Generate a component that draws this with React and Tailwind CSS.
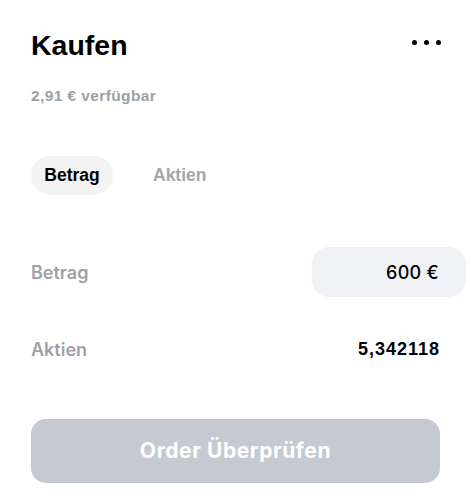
export default function App() {
  return (
    <div className="min-h-[500px] w-[476px] overflow-hidden bg-white pl-[31px] pr-[36px] pt-[28px] font-['Liberation_Sans','Inter',sans-serif]">
      {/* header */}
      <div className="flex items-start justify-between">
        <h1 className="text-[28.5px] font-bold leading-[34px] text-black">Kaufen</h1>
        <button className="mr-[-1px] mt-[12px] flex items-center gap-[7px]">
          <span className="h-[5px] w-[5px] rounded-full bg-black" />
          <span className="h-[5px] w-[5px] rounded-full bg-black" />
          <span className="h-[5px] w-[5px] rounded-full bg-black" />
        </button>
      </div>
      <p className="mt-[24px] text-[15.5px] font-bold leading-[20px] tracking-[0.4px] text-[#9b9fa6]">2,91 € verfügbar</p>

      {/* tabs */}
      <div className="mt-[50px] flex items-center gap-[27px]">
        <button className="h-[39px] w-[82px] rounded-full bg-[#f3f3f4] text-[17.5px] font-bold text-black">Betrag</button>
        <button className="h-[39px] px-[13px] text-[17.5px] font-bold text-[#a3a6ad]">Aktien</button>
      </div>

      {/* betrag row */}
      <div className="mt-[52px] flex items-center justify-between">
        <span className="font-['Inter',sans-serif] text-[18px] font-semibold text-[#9ea1a8]">Betrag</span>
        <div className="-mr-[26px] flex h-[50px] w-[154px] items-center justify-end rounded-[17px] bg-[#f1f2f6] pr-[27px]">
          <span className="font-['Inter',sans-serif] text-[18px] font-medium tracking-[0.3px] text-black">600 €</span>
        </div>
      </div>

      {/* aktien row */}
      <div className="mt-[40px] flex h-[24px] items-center justify-between">
        <span className="font-['Inter',sans-serif] text-[18px] font-semibold text-[#9ea1a8]">Aktien</span>
        <span className="text-[18px] font-bold tracking-[1px] text-black">5,342118</span>
      </div>

      {/* submit */}
      <button className="mt-[58px] flex h-[64px] w-full items-center justify-center rounded-[15px] bg-[#c5cad2] font-['Inter',sans-serif] text-[21px] font-bold tracking-[0.6px] text-white">
        Order Überprüfen
      </button>
    </div>
  );
}
